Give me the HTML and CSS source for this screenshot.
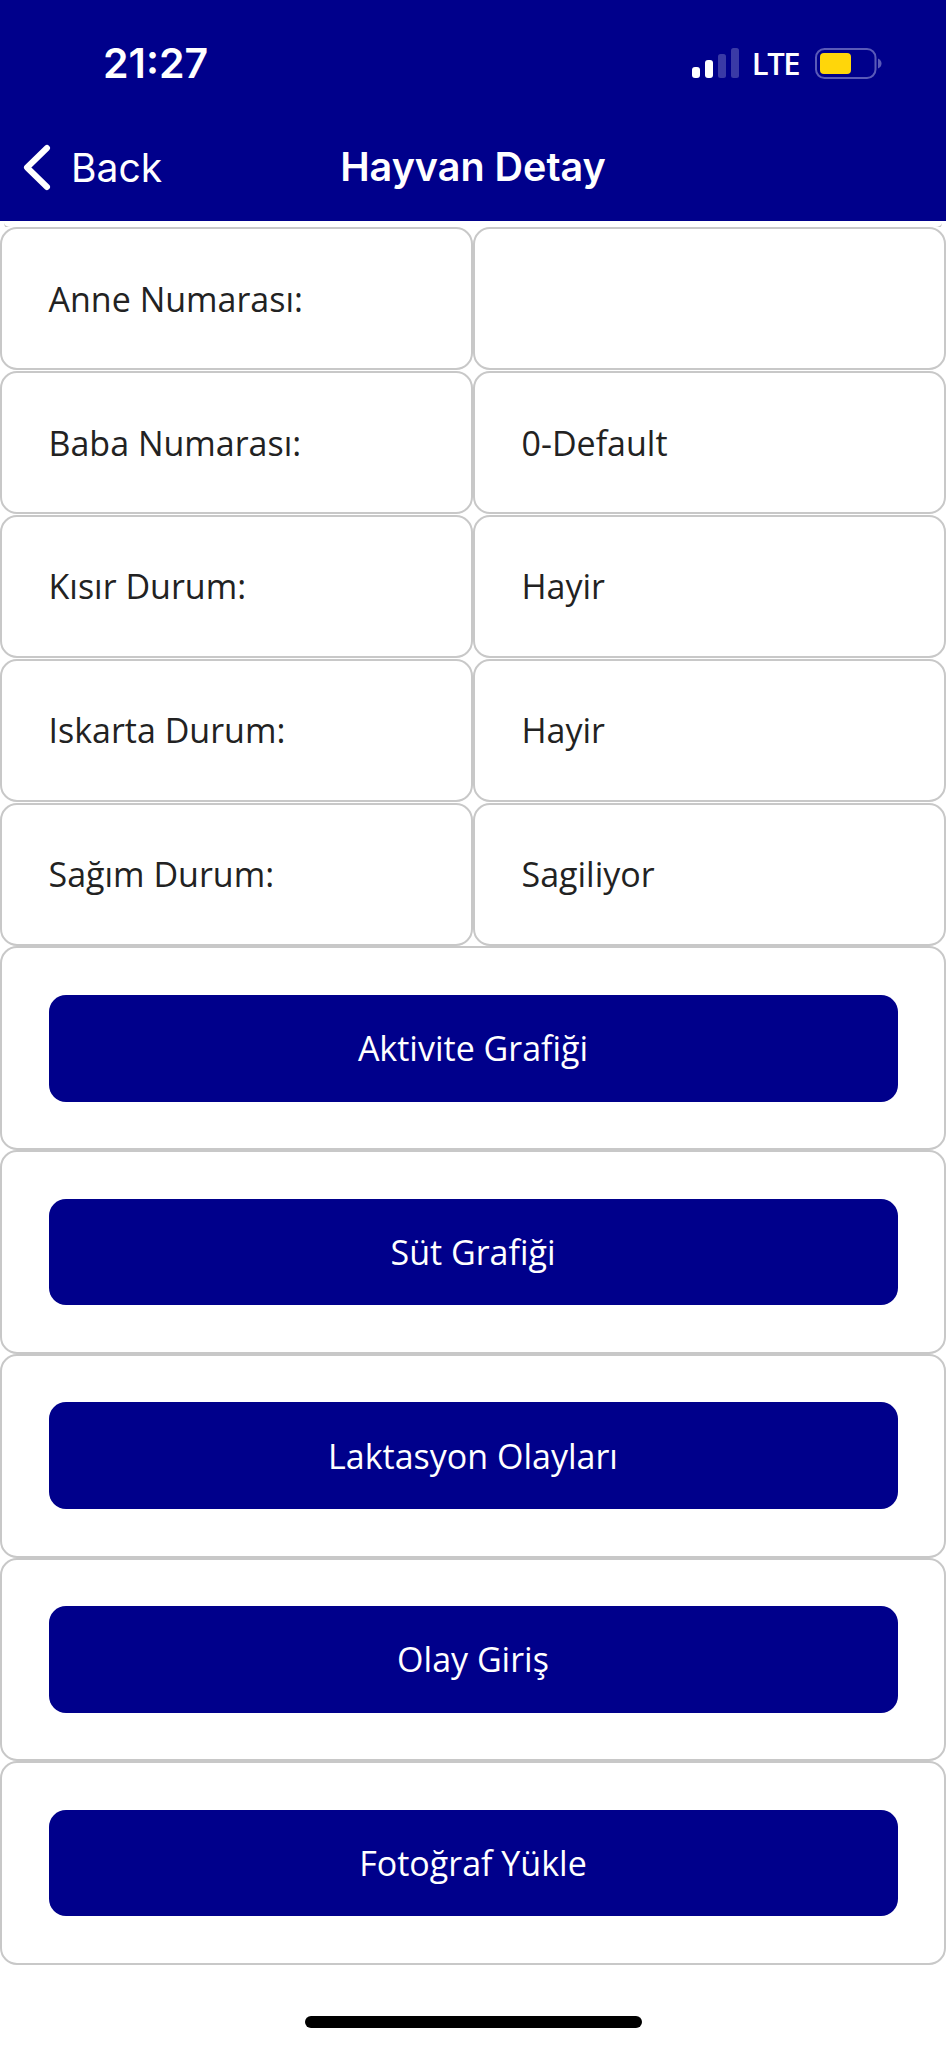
FILE: index.html
```html
<!DOCTYPE html>
<html lang="tr">
<head>
<meta charset="utf-8">
<title>Hayvan Detay</title>
<link rel="stylesheet" href="styles.css">
</head>
<body>
<div class="screen">
  <header class="header">
    <div class="status">
      <span class="time">21:27</span>
      <div class="status-right">
        <svg class="signal" viewBox="0 0 48 31" width="48" height="31" aria-hidden="true">
          <rect x="0" y="19" width="8" height="11" rx="3" fill="#fff"/>
          <rect x="13" y="12" width="8" height="18" rx="3" fill="#fff"/>
          <rect x="26" y="6" width="8" height="24" rx="2.5" fill="#3a3aa6"/>
          <rect x="39" y="0" width="8" height="30" rx="2.5" fill="#3a3aa6"/>
        </svg>
        <span class="lte">LTE</span>
        <svg class="battery" viewBox="0 0 67 31" width="67" height="31" aria-hidden="true">
          <rect x="1" y="1" width="59.500" height="29" rx="8.500" fill="none" stroke="#5a5ab8" stroke-width="2"/>
          <rect x="5" y="5" width="31" height="21" rx="4" fill="#ffd60a"/>
          <path d="M63 10.500c2.500 1 3.500 3 3.500 5s-1 4-3.500 5z" fill="#5a5ab8"/>
        </svg>
      </div>
    </div>
    <nav class="nav">
      <a class="back">
        <svg class="chevron" viewBox="0 0 29 47" width="29" height="47" aria-hidden="true">
          <path d="M25 4 5 23.500 25 43" fill="none" stroke="#fff" stroke-width="6" stroke-linecap="round" stroke-linejoin="round"/>
        </svg>
        <span>Back</span>
      </a>
      <h1 class="title">Hayvan Detay</h1>
    </nav>
  </header>

  <main class="content">
    <div class="sliver"></div>
    <div class="row"><div class="cell">Anne Numarası:</div><div class="cell"></div></div>
    <div class="row"><div class="cell">Baba Numarası:</div><div class="cell">0-Default</div></div>
    <div class="row"><div class="cell">Kısır Durum:</div><div class="cell">Hayir</div></div>
    <div class="row"><div class="cell">Iskarta Durum:</div><div class="cell">Hayir</div></div>
    <div class="row"><div class="cell">Sağım Durum:</div><div class="cell">Sagiliyor</div></div>
    <div class="action"><button class="btn">Aktivite Grafiği</button></div>
    <div class="action"><button class="btn">Süt Grafiği</button></div>
    <div class="action"><button class="btn">Laktasyon Olayları</button></div>
    <div class="action"><button class="btn">Olay Giriş</button></div>
    <div class="action"><button class="btn">Fotoğraf Yükle</button></div>
  </main>

  <div class="home-bar"></div>
</div>
</body>
</html>
```

FILE: styles.css
```css
* { box-sizing: border-box; }
html, body { margin: 0; padding: 0; background: #fff; }
.screen {
  width: 946px;
  height: 2048px;
  display: flex;
  flex-direction: column;
  overflow: hidden;
  background: #fff;
}
.header {
  height: 221px;
  flex: none;
  background: #00008b;
  color: #fff;
  font-family: Inter, "Liberation Sans", sans-serif;
}
.status {
  height: 126px;
  display: flex;
  align-items: flex-start;
  justify-content: space-between;
  padding: 0 64px 0 103px;
}
.time {
  font-size: 41px;
  font-weight: 600;
  line-height: 50px;
  margin-top: 38px;
}
.status-right {
  display: flex;
  align-items: center;
  margin-top: 48px;
}
.signal { display: block; margin-right: 12px; }
.lte {
  font-family: "Open Sans", sans-serif;
  font-size: 31px;
  font-weight: 600;
  line-height: 31px;
  letter-spacing: -1.500px;
  margin-right: 16px;
}
.battery { display: block; }
.nav {
  height: 95px;
  position: relative;
  display: flex;
  align-items: flex-start;
  justify-content: center;
}
.back {
  position: absolute;
  left: 22px;
  top: 18px;
  display: flex;
  align-items: center;
  gap: 20px;
  font-size: 39px;
  line-height: 47px;
}
.chevron { display: block; }
.title {
  margin: 16px 0 0;
  font-size: 39.500px;
  font-weight: 600;
  line-height: 50px;
}
.content {
  flex: none;
  font-family: "Open Sans", sans-serif;
  font-size: 34px;
}
.sliver {
  height: 6px;
  padding-top: 2px;
  overflow: hidden;
}
.sliver::before {
  content: "";
  display: block;
  height: 4px;
  margin: 0 4px;
  border-bottom: 3px solid #c8c8c8;
  border-radius: 0 0 12px 12px;
  background: #fff;
}
.row {
  display: grid;
  grid-template-columns: 473px 473px;
  height: 143.900px;
}
.cell {
  height: 143.400px;
  border: 2.500px solid #c8c8c8;
  border-radius: 17px;
  background: #fff;
  padding-left: 46.500px;
  display: flex;
  align-items: center;
  color: #222;
  line-height: 46px;
}
.action {
  height: 203.700px;
  padding: 0 46.500px;
  border: 2.500px solid #c8c8c8;
  border-radius: 17px;
  background: #fff;
  display: flex;
  align-items: center;
}
.btn {
  width: 100%;
  height: 106.500px;
  border: 0;
  border-radius: 17px;
  background: #00008b;
  color: #fff;
  font-family: "Open Sans", sans-serif;
  font-size: 34px;
  padding: 0;
}
.home-bar {
  width: 337px;
  height: 12px;
  margin: 51px auto 0;
  border-radius: 6px;
  background: #000;
  flex: none;
}
```
